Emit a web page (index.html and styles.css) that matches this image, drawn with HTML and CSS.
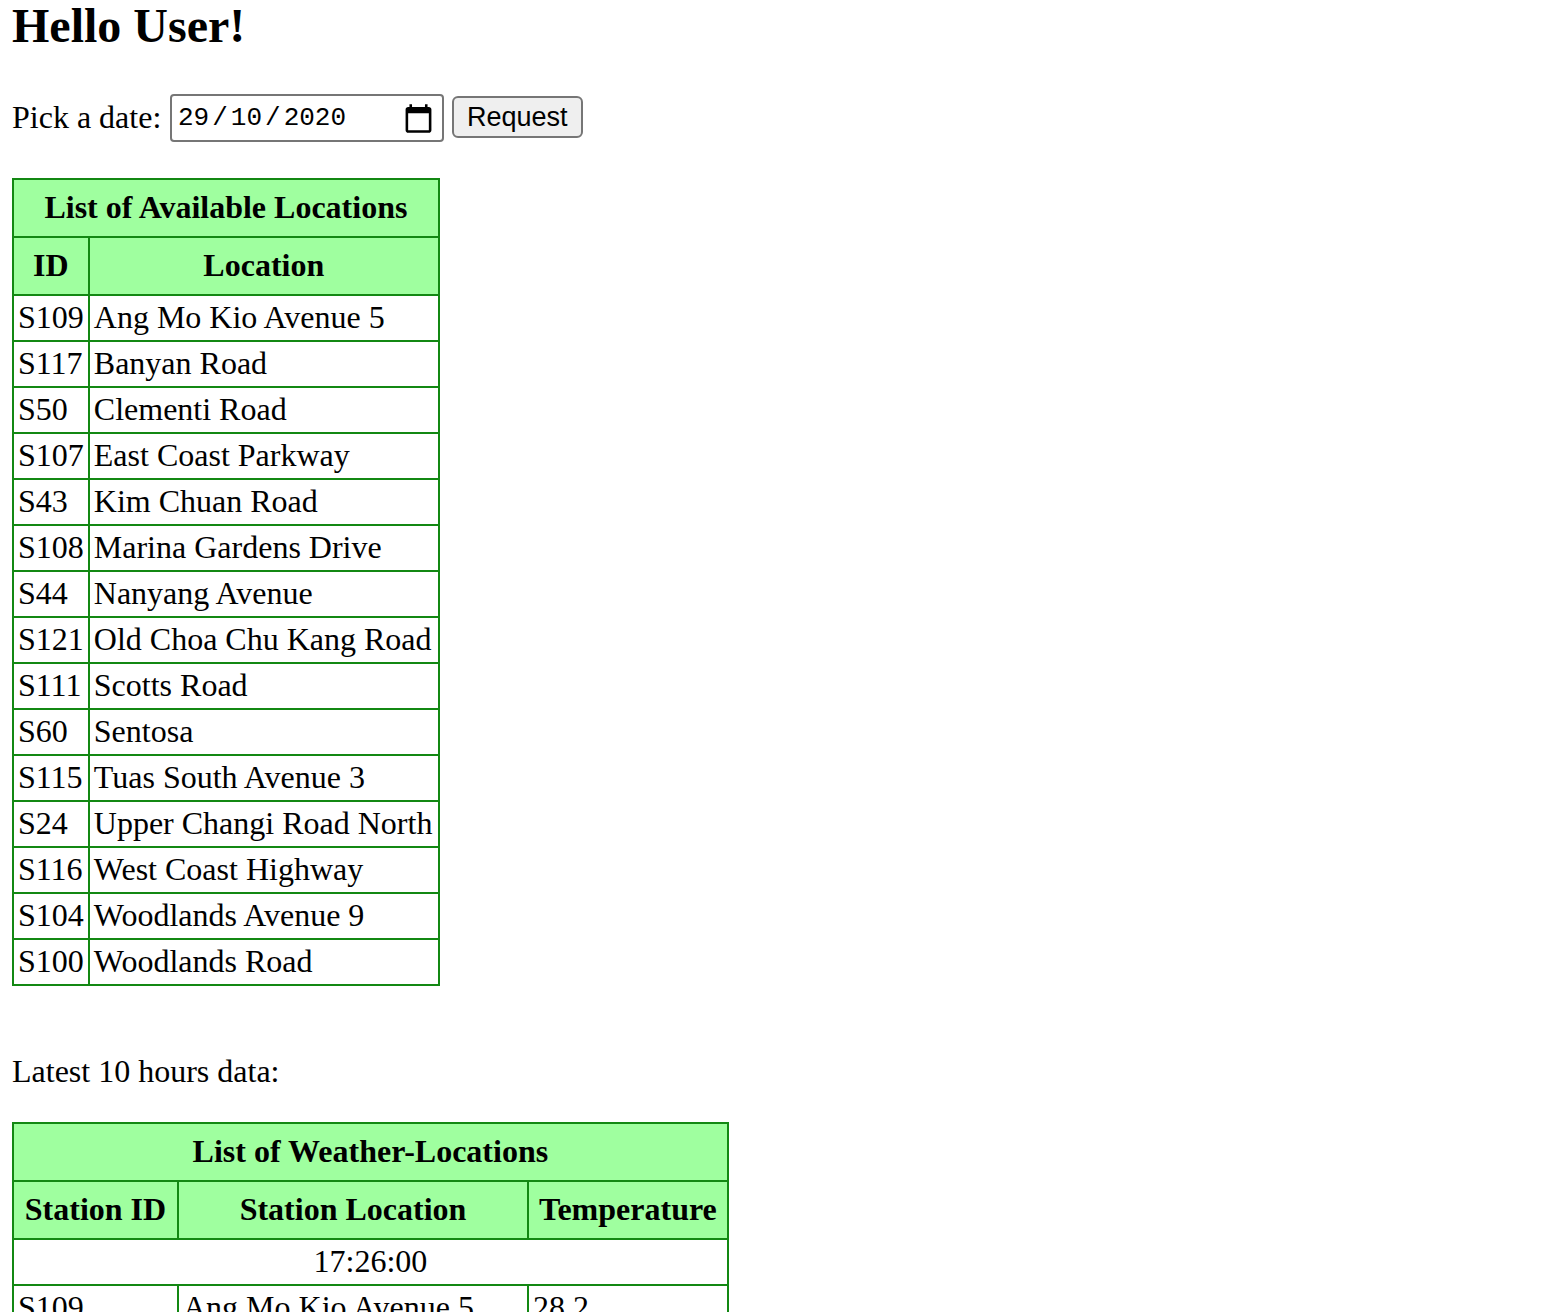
FILE: index.html
```html
<!DOCTYPE html>
<html lang="en-GB">
<head>
<meta charset="utf-8">
<meta name="viewport" content="width=device-width, initial-scale=1">
<title>Weather Locations</title>
<link rel="stylesheet" href="styles.css">
</head>
<body>
<h1 class="greeting">Hello User!</h1>

<form class="date-form">
  <label class="date-label" for="date">Pick a date:</label>
  <input class="date-input" type="date" id="date" name="date" value="2020-10-29">
  <button class="request-button" type="button">Request</button>
</form>

<table class="data-table">
  <thead>
    <tr><th colspan="2">List of Available Locations</th></tr>
    <tr><th>ID</th><th class="location-column">Location</th></tr>
  </thead>
  <tbody>
    <tr><td>S109</td><td>Ang Mo Kio Avenue 5</td></tr>
    <tr><td>S117</td><td>Banyan Road</td></tr>
    <tr><td>S50</td><td>Clementi Road</td></tr>
    <tr><td>S107</td><td>East Coast Parkway</td></tr>
    <tr><td>S43</td><td>Kim Chuan Road</td></tr>
    <tr><td>S108</td><td>Marina Gardens Drive</td></tr>
    <tr><td>S44</td><td>Nanyang Avenue</td></tr>
    <tr><td>S121</td><td>Old Choa Chu Kang Road</td></tr>
    <tr><td>S111</td><td>Scotts Road</td></tr>
    <tr><td>S60</td><td>Sentosa</td></tr>
    <tr><td>S115</td><td>Tuas South Avenue 3</td></tr>
    <tr><td>S24</td><td>Upper Changi Road North</td></tr>
    <tr><td>S116</td><td>West Coast Highway</td></tr>
    <tr><td>S104</td><td>Woodlands Avenue 9</td></tr>
    <tr><td>S100</td><td>Woodlands Road</td></tr>
  </tbody>
</table>

<p class="section-note">Latest 10 hours data:</p>

<table class="data-table">
  <thead>
    <tr><th colspan="3">List of Weather-Locations</th></tr>
    <tr><th class="station-column">Station ID</th><th class="location-column">Station Location</th><th>Temperature</th></tr>
  </thead>
  <tbody>
    <tr><td class="time" colspan="3">17:26:00</td></tr>
    <tr><td>S109</td><td>Ang Mo Kio Avenue 5</td><td>28.2</td></tr>
  </tbody>
</table>
</body>
</html>
```
FILE: styles.css
```css
body {
  margin: 0 12px;
  background: #fff;
  color: #000;
  font-family: "Liberation Serif", "Times New Roman", serif;
  font-size: 32px;
  line-height: 34px;
}

.greeting {
  margin: 0 0 42px;
  font-size: 48px;
  line-height: 52px;
}

.date-form {
  display: flex;
  align-items: center;
  gap: 8px;
  margin-bottom: 36px;
}

.date-label {
  min-width: 150px;
  padding-bottom: 2px;
}

.date-input {
  box-sizing: border-box;
  width: 274px;
  height: 48px;
  padding: 0 8px 0 3px;
  border: 2px solid #767676;
  border-radius: 4px;
  background: #fff;
  color: #000;
  font-family: "Liberation Mono", "Courier New", monospace;
  font-size: 26px;
}

/* Day first, whatever order the browser's locale uses. */
.date-input::-webkit-datetime-edit {
  padding: 0;
}

.date-input::-webkit-datetime-edit-fields-wrapper {
  display: inline-grid;
  grid-template-columns: repeat(5, auto);
  padding: 0;
}

.date-input::-webkit-datetime-edit-text {
  grid-row: 1;
}

.date-input::-webkit-datetime-edit-day-field {
  grid-area: 1 / 1;
  padding: 0 3px;
}

.date-input::-webkit-datetime-edit-month-field {
  grid-area: 1 / 3;
  padding: 0 3px;
}

.date-input::-webkit-datetime-edit-year-field {
  grid-area: 1 / 5;
  padding: 0 3px;
}

.date-input::-webkit-calendar-picker-indicator {
  width: 31px;
  height: 31px;
  margin: 0;
  padding: 0;
  background: url("data:image/svg+xml,%3Csvg xmlns='http://www.w3.org/2000/svg' viewBox='0 0 24 24'%3E%3Cpath d='M20 3h-1V1h-2v2H7V1H5v2H4c-1.1 0-2 .9-2 2v16c0 1.1.9 2 2 2h16c1.1 0 2-.9 2-2V5c0-1.1-.9-2-2-2zm0 18H4V8h16v13z'/%3E%3C/svg%3E") center / contain no-repeat;
}

.request-button {
  height: 42px;
  margin-bottom: 2px;
  padding: 0 13px;
  border: 2px solid #767676;
  border-radius: 6px;
  background: #efefef;
  color: #000;
  font-family: "Liberation Sans", Arial, sans-serif;
  font-size: 27px;
}

.data-table {
  border-collapse: collapse;
}

.data-table th,
.data-table td {
  padding: 4px 4px 6px;
  border: 2px solid #138813;
}

.data-table th {
  padding: 10px 10px 12px;
  background: #9fff9f;
}

.data-table .station-column {
  box-sizing: border-box;
  width: 165px;
}

.data-table .location-column {
  box-sizing: border-box;
  width: 350px;
}

.data-table .time {
  text-align: center;
}

.section-note {
  margin: 68px 0 34px;
}
```
